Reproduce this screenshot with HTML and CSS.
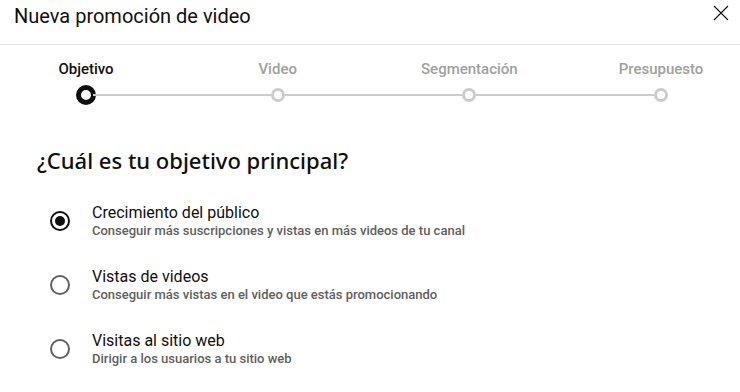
FILE: index.html
```html
<!DOCTYPE html>
<html lang="es">
<head>
    <meta charset="UTF-8">
    <meta name="viewport" content="width=device-width, initial-scale=1.0">
    <title>Nueva promoción de video</title>
    <link rel="stylesheet" href="styles.css">
</head>
<body>
    <div class="dialog">
        <div class="header">
            <h1 class="title">Nueva promoción de video</h1>
            <button class="close-btn" aria-label="Cerrar">
                <svg width="16" height="16" viewBox="0 0 16 16">
                    <path d="M1 1 L15 15 M15 1 L1 15" stroke="#0f0f0f" stroke-width="1.1" fill="none"/>
                </svg>
            </button>
        </div>

        <div class="stepper">
            <div class="step active">
                <span class="step-label">Objetivo</span>
                <span class="step-dot"></span>
            </div>
            <span class="step-line"></span>
            <div class="step">
                <span class="step-label">Video</span>
                <span class="step-dot"></span>
            </div>
            <span class="step-line"></span>
            <div class="step">
                <span class="step-label">Segmentación</span>
                <span class="step-dot"></span>
            </div>
            <span class="step-line"></span>
            <div class="step">
                <span class="step-label">Presupuesto</span>
                <span class="step-dot"></span>
            </div>
        </div>

        <div class="content">
            <h2 class="question">¿Cuál es tu objetivo principal?</h2>
            <div class="options">
                <label class="option">
                    <span class="radio checked"></span>
                    <span class="option-text">
                        <span class="option-title">Crecimiento del público</span>
                        <span class="option-desc">Conseguir más suscripciones y vistas en más videos de tu canal</span>
                    </span>
                </label>
                <label class="option">
                    <span class="radio"></span>
                    <span class="option-text">
                        <span class="option-title">Vistas de videos</span>
                        <span class="option-desc">Conseguir más vistas en el video que estás promocionando</span>
                    </span>
                </label>
                <label class="option">
                    <span class="radio"></span>
                    <span class="option-text">
                        <span class="option-title">Visitas al sitio web</span>
                        <span class="option-desc">Dirigir a los usuarios a tu sitio web</span>
                    </span>
                </label>
            </div>
        </div>
    </div>
</body>
</html>
```

FILE: styles.css
```css
body {
    font-family: Roboto, "Liberation Sans", sans-serif;
    margin: 0;
    padding: 0;
    background-color: #fff;
    color: #0f0f0f;
}
.header {
    display: flex;
    justify-content: space-between;
    align-items: flex-start;
    height: 40px;
    padding: 4px 11px 0 14px;
    border-bottom: 1px solid #e5e5e5;
}
.title {
    margin: 0;
    font-size: 20px;
    font-weight: 400;
    line-height: 24px;
}
.close-btn {
    background: none;
    border: none;
    padding: 0;
    margin-top: 1px;
    width: 16px;
    height: 16px;
    cursor: pointer;
}
.close-btn svg {
    display: block;
}
.stepper {
    display: flex;
    align-items: flex-end;
    margin: 14px 69px 0 76px;
}
.step {
    width: 20px;
    display: flex;
    flex-direction: column;
    align-items: center;
}
.step-label {
    white-space: nowrap;
    font-size: 15px;
    font-weight: 500;
    line-height: 20px;
    color: #a0a0a0;
    margin-bottom: 6px;
}
.step.active .step-label {
    color: #0f0f0f;
}
.step-dot {
    box-sizing: border-box;
    width: 14px;
    height: 14px;
    margin: 3px 0;
    border: 3px solid #cccccc;
    border-radius: 50%;
    background: #fff;
}
.step.active .step-dot {
    width: 20px;
    height: 20px;
    margin: 0;
    border: 5px solid #0f0f0f;
}
.step-line {
    flex: 1;
    height: 2px;
    margin: 0 -3px 9px;
    background: #cccccc;
}
.content {
    padding: 0 37px;
}
.question {
    margin: 41px 0 0;
    font-family: "Noto Sans", sans-serif;
    font-size: 22px;
    font-weight: 500;
    line-height: 28px;
}
.options {
    margin-top: 29px;
    display: flex;
    flex-direction: column;
    gap: 28px;
}
.option {
    display: flex;
    align-items: center;
    gap: 22px;
    padding-left: 13px;
    cursor: pointer;
}
.radio {
    box-sizing: border-box;
    width: 20px;
    height: 20px;
    border: 2px solid #606060;
    border-radius: 50%;
    display: flex;
    align-items: center;
    justify-content: center;
}
.radio.checked {
    border-color: #0f0f0f;
}
.radio.checked::after {
    content: "";
    width: 10px;
    height: 10px;
    border-radius: 50%;
    background: #0f0f0f;
}
.option-text {
    display: flex;
    flex-direction: column;
}
.option-title {
    font-size: 16px;
    line-height: 20px;
}
.option-desc {
    font-size: 13px;
    font-weight: 500;
    line-height: 16px;
    color: #606060;
}
```
